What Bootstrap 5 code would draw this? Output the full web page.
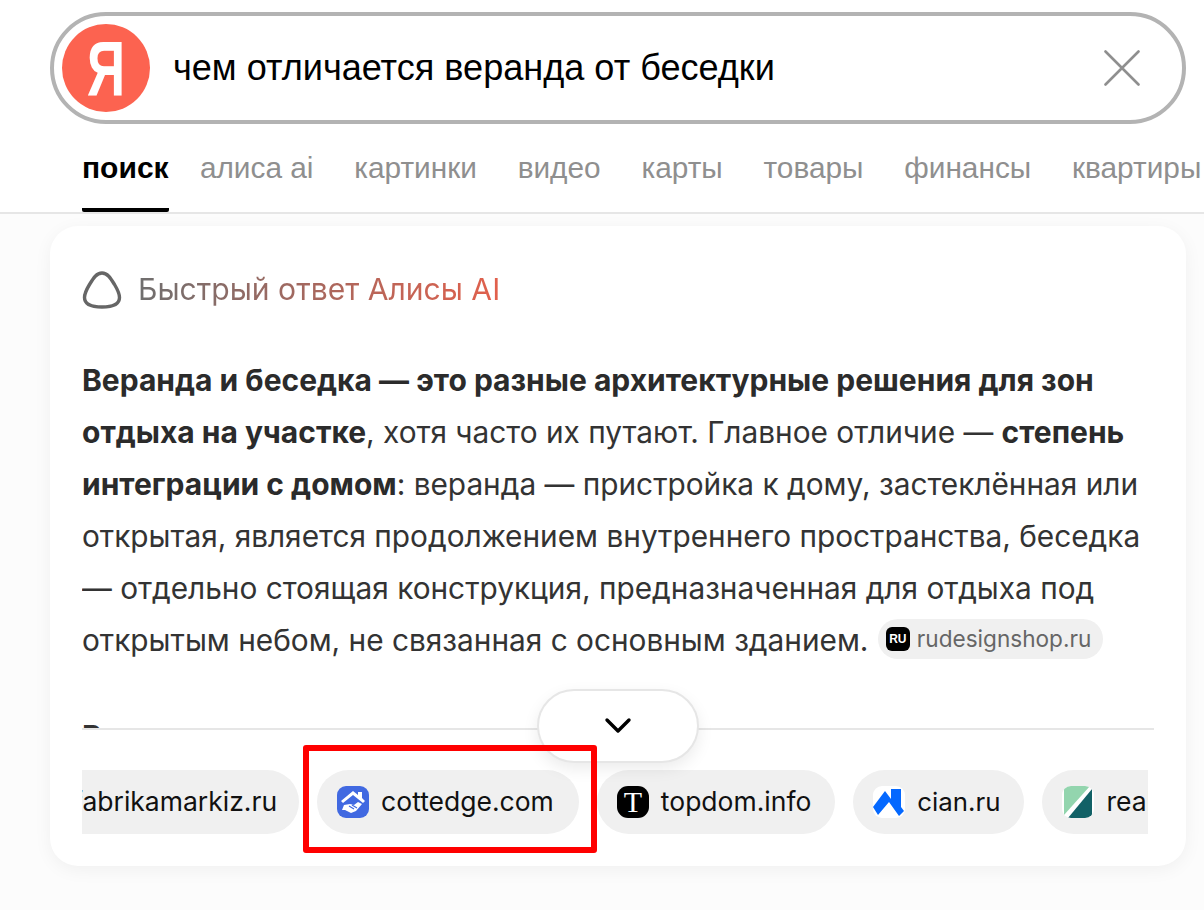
<!DOCTYPE html>
<html lang="ru">
<head>
<meta charset="utf-8">
<title>чем отличается веранда от беседки</title>
<link href="https://cdn.jsdelivr.net/npm/bootstrap@5.3.0/dist/css/bootstrap.min.css" rel="stylesheet">
<style>
html,body{height:910px;overflow:hidden}
body{background:#fcfcfc;font-family:"Inter","Liberation Sans",sans-serif;color:#2f2f2f}
.top-area{background:#fff;height:214px;border-bottom:2px solid #e6e6e6;padding:12px 0 0 50px;overflow:hidden}
.search-pill{height:112px;width:1136px;border:4px solid #b3b3b3;border-radius:56px;padding:0 42px 0 8px}
.ya-logo{width:88px;height:88px;background:#fc6350;color:#fff;font:700 78px/88px "Liberation Sans",sans-serif;text-align:center}
.ya-letter{display:inline-block;transform:scaleX(.68)}
.query{font:400 36.1px/1 "Liberation Sans",sans-serif;color:#000;margin-left:23px}
.tabs{padding-left:32px;gap:40.8px;white-space:nowrap;height:88px;font:400 29.8px/1 "Liberation Sans",sans-serif;color:#8f8f8f}
.tab-item{height:100%;padding-top:29px}
.tab-on{color:#000;font-weight:700;font-size:30px;border-bottom:4px solid #000;border-radius:0 0 2px 2px;margin-right:-9.5px}
.answer{position:relative;margin:12px 18px 0 50px;height:640px;background:#fff;border-radius:28px;box-shadow:0 4px 18px rgba(0,0,0,.05);padding:44px 32px 0;overflow:hidden}
.answer-head{height:40px;gap:16px;font-size:30.1px;font-weight:400}
.grad-text{background:linear-gradient(90deg,#6f6f6f 0%,#e2604c 100%);-webkit-background-clip:text;background-clip:text;color:transparent}
.answer-text{margin:44px 0 0;font-size:29.8px;line-height:52px;height:312px;color:#333;overflow:hidden}
.answer-text b{font-weight:700;font-size:30px;color:#2b2b2b}
.src-pill{display:inline-flex;align-items:center;vertical-align:middle;height:40px;padding:0 12px 0 8px;gap:7px;background:#f0f0f0;border-radius:20px;font-size:22.6px;line-height:1;color:#666;margin-left:1px;margin-top:-8px}
.ru-ico{width:24px;height:24px;border-radius:6px;background:#000;color:#fff;font:700 12px/24px "Liberation Sans",sans-serif;text-align:center}
.clipped-line{margin-top:59px;height:3px;overflow:hidden;font-weight:700;font-size:30px;line-height:22px;color:#333}
.divider-line{height:2px;background:#e6e6e6;width:1072px}
.more-btn{position:absolute;left:487px;top:463px;width:162px;height:74px;border-radius:37px;background:#fff;border:2px solid #e6e6e6;box-shadow:0 6px 16px rgba(0,0,0,.08)}
.chips{margin-top:40px;gap:18px;width:1066px;overflow:hidden;white-space:nowrap}
.chip{flex:none;height:64px;border-radius:32px;background:#f0f0f0;padding:0 25px 0 20px;gap:12px;font-size:26.5px;color:#111}
.chip-first{margin-left:-45px;padding:0 22px 0 36px}
.chip-topdom{padding-right:24px}
.chip-cian{font-size:25.8px;padding-right:24px}
.fav{width:32px;height:32px;flex:none;border-radius:9px;overflow:hidden}
.fav svg{display:block}
.fav-t{background:#000;color:#fff;border-radius:11px;font:400 30px/32px "Liberation Serif",serif;text-align:center}
.fav-white{background:#fff}
.red-box{position:absolute;left:253px;top:519px;width:294px;height:108px;border:6px solid #f00;border-radius:3px;pointer-events:none}
</style>
</head>
<body>
<header class="top-area">
  <div class="search-pill d-flex align-items-center">
    <div class="ya-logo rounded-circle flex-shrink-0"><span class="ya-letter">Я</span></div>
    <div class="query flex-grow-1">чем отличается веранда от беседки</div>
    <svg width="36" height="36" viewBox="0 0 36 36" fill="none" stroke="#8f8f8f" stroke-width="2.600" stroke-linecap="round"><path d="M1.500 1.500 34.500 34.500M34.500 1.500 1.500 34.500"/></svg>
  </div>
  <nav class="tabs d-flex">
    <div class="tab-item tab-on">поиск</div>
    <div class="tab-item">алиса ai</div>
    <div class="tab-item">картинки</div>
    <div class="tab-item">видео</div>
    <div class="tab-item">карты</div>
    <div class="tab-item">товары</div>
    <div class="tab-item">финансы</div>
    <div class="tab-item">квартиры</div>
  </nav>
</header>
<main class="answer">
  <div class="answer-head d-flex align-items-center">
    <svg width="40" height="40" viewBox="0 0 40 40" fill="none" stroke="#666" stroke-width="3.400" class="flex-shrink-0"><path d="M20 3C14.500 3 11.500 8 7.500 14.500C4.500 19.500 2.500 23.500 2.500 27.500C2.500 34 9 37 20 37C31 37 37.500 34 37.500 27.500C37.500 23.500 35.500 19.500 32.500 14.500C28.500 8 25.500 3 20 3Z"/></svg>
    <span class="grad-text">Быстрый ответ Алисы AI</span>
  </div>
  <p class="answer-text"><b>Веранда и беседка — это разные архитектурные решения для зон отдыха на участке</b>, хотя часто их путают. Главное отличие — <b>степень интеграции с домом</b>: веранда — пристройка к дому, застеклённая или открытая, является продолжением внутреннего пространства, беседка — отдельно стоящая конструкция, предназначенная для отдыха под открытым небом, не связанная с основным зданием. <span class="src-pill"><span class="ru-ico">RU</span>rudesignshop.ru</span></p>
  <div class="clipped-line">Р</div>
  <div class="divider-line"></div>
  <div class="chips d-flex">
    <div class="chip chip-first d-flex align-items-center"><span>fabrikamarkiz.ru</span></div>
    <div class="chip d-flex align-items-center">
      <span class="fav"><svg width="32" height="32" viewBox="0 0 32 32"><rect width="32" height="32" fill="#4169e1"/><path d="M4 15 16 5l5 4V6h4v6l3 3-2 2-10-8-10 8z" fill="#fff"/><path d="M7 19l6-1 4 1 4-3 4 2-6 7-5 2-6-3-3 0z" fill="#fff"/><path d="M12 20l5 3M15 19l5 3" stroke="#4169e1" stroke-width="1.200"/></svg></span>
      <span>cottedge.com</span>
    </div>
    <div class="chip chip-topdom d-flex align-items-center"><span class="fav fav-t">T</span><span>topdom.info</span></div>
    <div class="chip chip-cian d-flex align-items-center">
      <span class="fav fav-white"><svg width="32" height="32" viewBox="0 0 32 32"><path d="M0 21 12 5l6 8V3h10v18l3 4-5 5-10-14L5 29z" fill="#0468ff"/></svg></span>
      <span>cian.ru</span>
    </div>
    <div class="chip d-flex align-items-center">
      <span class="fav fav-white"><svg width="32" height="32" viewBox="0 0 32 32"><path d="M2 0h26L2 29z" fill="#93d5ae"/><path d="M30 3v29H6z" fill="#126166"/></svg></span>
      <span>realty.ru</span>
    </div>
  </div>
  <button type="button" class="more-btn btn p-0 d-flex align-items-center justify-content-center" aria-label="Развернуть">
    <svg width="28" height="18" viewBox="0 0 28 18" fill="none" stroke="#000" stroke-width="3.400" stroke-linecap="round" stroke-linejoin="round"><path d="M3 3 14 14 25 3"/></svg>
  </button>
  <div class="red-box"></div>
</main>
<script src="https://cdn.jsdelivr.net/npm/bootstrap@5.3.0/dist/js/bootstrap.bundle.min.js"></script>
</body>
</html>
